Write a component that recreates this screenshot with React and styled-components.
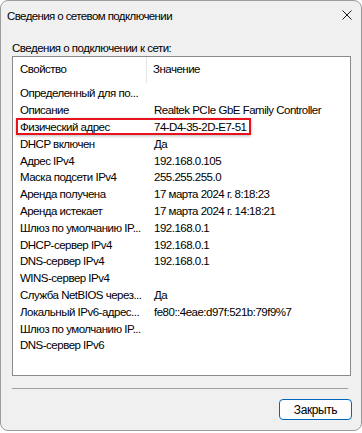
import React from "react";
import styled, { createGlobalStyle } from "styled-components";

const Global = createGlobalStyle`
  html, body { margin: 0; padding: 0; background: #ffffff; }
  body { width: 362px; height: 433px; overflow: hidden; font-family: "Liberation Sans", Arial, sans-serif; }
`;

const Window = styled.div`
  box-sizing: border-box;
  width: 362px;
  height: 431px;
  background: #f0f0f0;
  border: 1px solid #9c9c9c;
  border-radius: 8px;
  display: flex;
  flex-direction: column;
  overflow: hidden;
  color: #000;
  font-size: 11.5px;
  letter-spacing: -0.5px;
`;

const TitleBar = styled.div`
  height: 29px;
  display: flex;
  align-items: center;
  justify-content: space-between;
  padding: 0 9px 3px 6px;
`;

const TitleText = styled.span`
  color: #000;
  letter-spacing: -0.6px;
`;

const CloseIcon = styled.svg`
  width: 10px;
  height: 10px;
  margin-top: -1px;
`;

const Body = styled.div`
  display: flex;
  flex-direction: column;
  padding: 8px 10px 0 11px;
  flex: 1;
`;

const Label = styled.div`
  height: 15px;
  line-height: 15px;
`;

const ListBox = styled.div`
  box-sizing: border-box;
  width: 339px;
  height: 320px;
  background: #fff;
  border: 1px solid #8a8a8a;
  display: flex;
  flex-direction: column;
`;

const Header = styled.div`
  display: grid;
  grid-template-columns: 134px 1fr;
  height: 26px;
`;

const HeaderCell = styled.div`
  display: flex;
  align-items: center;
  padding-left: ${(p) => p.$pad}px;
  padding-bottom: 2px;
  border-right: ${(p) => (p.$divider ? "1px solid #e5e5e5" : "none")};
`;

const Rows = styled.div`
  padding-top: 2px;
  display: flex;
  flex-direction: column;
`;

const Row = styled.div`
  position: relative;
  display: grid;
  grid-template-columns: 135px 1fr;
  height: 16.8px;
  align-items: center;
  white-space: nowrap;
`;

const Cell = styled.span`
  padding-left: ${(p) => p.$pad}px;
  overflow: hidden;
`;

const Highlight = styled.div`
  position: absolute;
  left: 3px;
  top: -1px;
  width: 235px;
  height: 17px;
  box-sizing: border-box;
  border: 2px solid #e8121c;
  box-shadow: 0 1px 3px rgba(0, 0, 0, 0.28);
  pointer-events: none;
`;

const Separator = styled.div`
  height: 1px;
  width: 336px;
  background: #a0a0a0;
  margin-top: 12px;
`;

const Footer = styled.div`
  display: flex;
  justify-content: flex-end;
  margin-top: 10px;
  margin-right: -1px;
`;

const Button = styled.button`
  box-sizing: border-box;
  width: 73px;
  height: 21px;
  border: 1px solid #0067c0;
  border-radius: 4px;
  background: #fdfdfd;
  font-family: "Liberation Sans", Arial, sans-serif;
  font-size: 12px;
  letter-spacing: -0.4px;
  color: #000;
  padding: 0;
`;

const rows = [
  ["Определенный для по...", ""],
  ["Описание", "Realtek PCIe GbE Family Controller"],
  ["Физический адрес", "74-D4-35-2D-E7-51", true],
  ["DHCP включен", "Да"],
  ["Адрес IPv4", "192.168.0.105"],
  ["Маска подсети IPv4", "255.255.255.0"],
  ["Аренда получена", "17 марта 2024 г. 8:18:23"],
  ["Аренда истекает", "17 марта 2024 г. 14:18:21"],
  ["Шлюз по умолчанию IP...", "192.168.0.1"],
  ["DHCP-сервер IPv4", "192.168.0.1"],
  ["DNS-сервер IPv4", "192.168.0.1"],
  ["WINS-сервер IPv4", ""],
  ["Служба NetBIOS через...", "Да"],
  ["Локальный IPv6-адрес...", "fe80::4eae:d97f:521b:79f9%7"],
  ["Шлюз по умолчанию IP...", ""],
  ["DNS-сервер IPv6", ""],
];

export default function App() {
  return (
    <>
      <Global />
      <Window>
        <TitleBar>
          <TitleText>Сведения о сетевом подключении</TitleText>
          <CloseIcon viewBox="0 0 10 10">
            <path d="M0.5 0.5 L9.5 9.5 M9.5 0.5 L0.5 9.5" stroke="#1a1a1a" strokeWidth="1" fill="none" />
          </CloseIcon>
        </TitleBar>
        <Body>
          <Label>Сведения о подключении к сети:</Label>
          <ListBox>
            <Header>
              <HeaderCell $pad={7} $divider>Свойство</HeaderCell>
              <HeaderCell $pad={6}>Значение</HeaderCell>
            </Header>
            <Rows>
              {rows.map(([k, v, hl], i) => (
                <Row key={i}>
                  <Cell $pad={7}>{k}</Cell>
                  <Cell $pad={6}>{v}</Cell>
                  {hl && <Highlight />}
                </Row>
              ))}
            </Rows>
          </ListBox>
          <Separator />
          <Footer>
            <Button>Закрыть</Button>
          </Footer>
        </Body>
      </Window>
    </>
  );
}
